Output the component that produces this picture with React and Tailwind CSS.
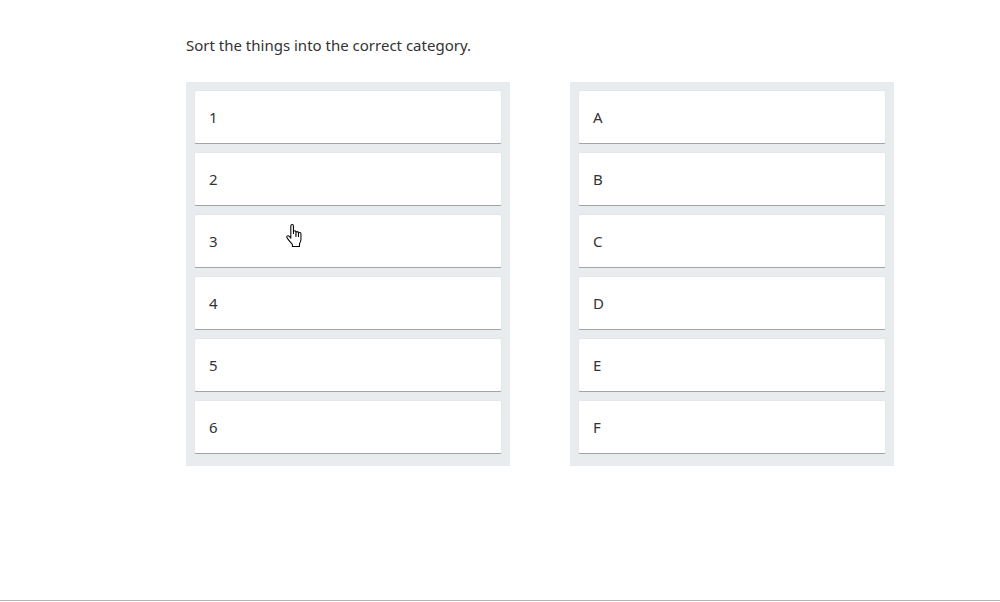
import React from 'react';

const left = ['1', '2', '3', '4', '5', '6'];
const right = ['A', 'B', 'C', 'D', 'E', 'F'];

const Card = ({ label }) => (
  <div className="h-[54px] flex items-center pl-[14px] bg-white rounded-[2px] border border-[#e4e6e8] border-b-[#a2a4a6] text-[15px] leading-6 text-[#333]">
    <span>{label}</span>
  </div>
);

const Column = ({ items }) => (
  <div className="w-[324px] bg-[#e9ecef] pt-2 px-2 pb-3 flex flex-col gap-2">
    {items.map((item) => (
      <Card key={item} label={item} />
    ))}
  </div>
);

const HandCursor = () => (
  <svg width="20" height="24" viewBox="0 0 19 23" className="absolute left-[285px] top-[224px]">
    <path
      d="M5.5 2 C5.5 1 6 0.5 6.8 0.5 C7.6 0.5 8 1 8 2 V9 V7.6 C8 6.9 8.5 6.5 9.2 6.5 C9.9 6.5 10.4 6.9 10.4 7.6 V9.5 V8.4 C10.4 7.7 10.9 7.3 11.6 7.3 C12.3 7.3 12.8 7.7 12.8 8.4 V10 V9.2 C12.8 8.5 13.3 8.1 14 8.1 C14.7 8.1 15.2 8.5 15.2 9.2 V14.5 C15.2 16.5 14.3 18 13.8 19 V21.5 H7 V19.5 C6 18.5 3.5 15.5 2 13.5 C1.4 12.7 1.6 11.8 2.2 11.4 C2.9 11 3.6 11.3 4.2 12 L5.5 13.6 Z"
      fill="#fff"
      stroke="#000"
      strokeWidth="1"
      strokeLinejoin="round"
    />
    <path d="M10.4 9.5 V12.5 M12.8 10 V12.5" stroke="#000" strokeWidth="1" fill="none" />
  </svg>
);

export default function App() {
  return (
    <div className="relative w-[1000px] h-[602px] bg-white font-['Noto_Sans',sans-serif] text-[#333]">
      <div className="pl-[186px] pt-[33px]">
        <p className="text-[15px] leading-6">Sort the things into the correct category.</p>
        <div className="mt-[25px] flex gap-[60px]">
          <Column items={left} />
          <Column items={right} />
        </div>
      </div>
      <HandCursor />
      <div className="absolute left-0 right-0 top-[600px] h-px bg-[#b5b5b5]" />
    </div>
  );
}
